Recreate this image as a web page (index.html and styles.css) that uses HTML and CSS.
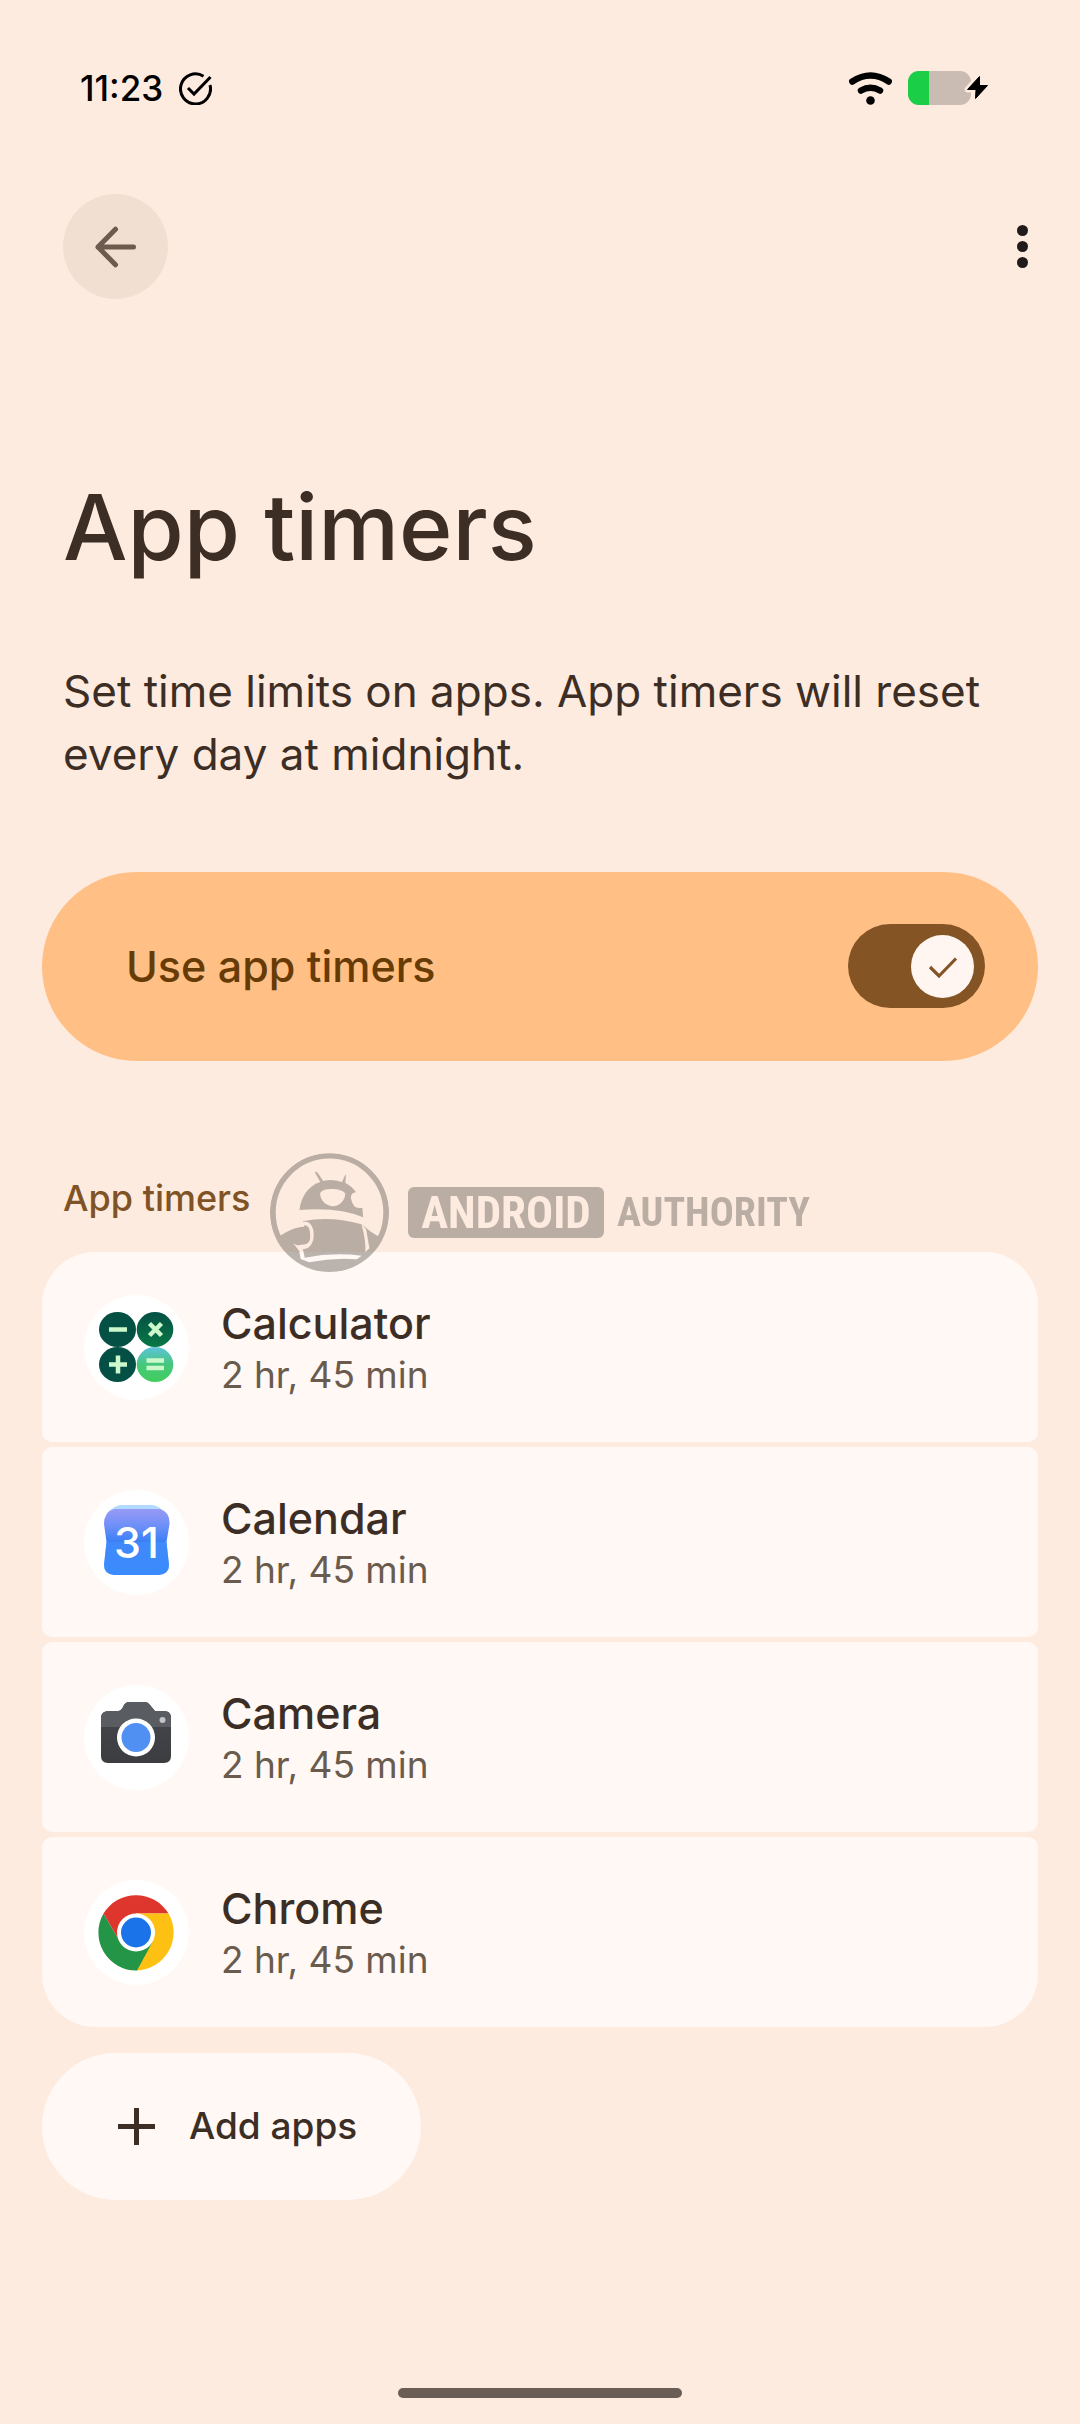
FILE: index.html
```html
<!DOCTYPE html>
<html lang="en">
<head>
<meta charset="utf-8">
<meta name="viewport" content="width=device-width, initial-scale=1">
<title>App timers</title>
<link rel="stylesheet" href="styles.css">
</head>
<body>
<header class="status">
  <div class="status-group">
    <time class="clock">11:23</time>
    <svg class="status-check" viewBox="0 0 33 33" aria-hidden="true"><path d="M24.500 4.200A15 15 0 1 0 31 13" fill="none" stroke="#000" stroke-width="3"/><path d="M9 16l6 6L31.500 5" fill="none" stroke="#000" stroke-width="3"/></svg>
  </div>
  <div class="status-group">
    <svg class="wifi" viewBox="0 0 43 33" aria-hidden="true"><g fill="none" stroke="#000" stroke-width="6.500" stroke-linecap="round"><path d="M3.300 9.500Q21.500-2.500 39.700 9.500"/><path d="M12 18.500Q21.500 13 31 18.500"/></g><circle cx="21.500" cy="28.500" r="4.300"/></svg>
    <svg class="battery" viewBox="0 0 81 34" aria-hidden="true"><rect width="63" height="34" rx="11" fill="#cbbcb3"/><path d="M11 0H21V34H11A11 11 0 0 1 0 23V11A11 11 0 0 1 11 0Z" fill="#1bce48"/><path d="M71.500 5L59.500 18.500H67L67.500 28.500L79.500 14.500H72Z" fill="#feebdf" stroke="#feebdf" stroke-width="6" stroke-linejoin="round"/><path d="M71.500 5.500L59.500 18.500H68L67.500 27.500L79.500 14.500H71.500Z" fill="#000" stroke="#000" stroke-width="1" stroke-linejoin="round"/></svg>
  </div>
</header>

<nav class="toolbar">
  <button class="back" type="button" aria-label="Back"><svg viewBox="0 0 42 42" aria-hidden="true"><path d="M38.500 21H3M20.500 3.200L3 21L20.500 38.800" fill="none" stroke="#6c5b4e" stroke-width="5" stroke-linecap="round" stroke-linejoin="round"/></svg></button>
  <button class="more" type="button" aria-label="More options"><svg viewBox="0 0 11 43" aria-hidden="true"><g fill="#211a1b"><circle cx="5.500" cy="5.500" r="5.500"/><circle cx="5.500" cy="21.500" r="5.500"/><circle cx="5.500" cy="37.500" r="5.500"/></g></svg></button>
</nav>

<main class="content">
  <h1 class="title">App timers</h1>
  <p class="intro">Set time limits on apps. App timers will reset every day at midnight.</p>

  <label class="master">
    <span>Use app timers</span>
    <span class="switch">
      <input class="switch-input" type="checkbox" role="switch" checked>
      <svg class="switch-check" viewBox="0 0 63 63" aria-hidden="true"><path d="M19 32L28 41L45 23.500" fill="none" stroke="#845425" stroke-width="3.200"/></svg>
    </span>
  </label>

  <section class="timers">
    <h2 class="label">App timers</h2>

    <div class="watermark">
      <svg class="mark" viewBox="54 69 322 357" preserveAspectRatio="none" aria-hidden="true">
        <defs>
          <clipPath id="disc"><ellipse cx="215" cy="247.500" rx="161" ry="178.500"/></clipPath>
          <mask id="robot" maskUnits="userSpaceOnUse" x="54" y="69" width="322" height="357">
            <ellipse cx="215" cy="247.500" rx="153.500" ry="170" fill="none" stroke="#fff" stroke-width="16"/>
            <path fill="#fff" d="M134 240C137 205 155 168 190 156L176 128Q175 120 184 130L198 153Q222 146 249 156L256 138Q262 127 259 142L258 159Q275 168 287 187Q272 189 273 204Q278 240 304 233L306 262Q240 230 134 240Z"/>
            <path fill="#fff" d="M60 335Q110 290 147 290L143 274Q215 256 302 283L325 304L376 340V426H54Z"/>
            <path fill="#000" d="M190 190C193 174 245 172 257 190C260 210 240 229 225 229C205 229 188 208 190 190Z"/>
            <path fill="#000" d="M143 276C166 271 174 297 172 322C169 348 155 359 143 357L148 383Q225 366 302 377L289 388Q225 382 160 397L137 387L133 362L116 339Q126 349 138 344C154 345 163 338 163 318C162 295 159 284 143 286Z"/>
            <path fill="#000" d="M301 281L314 298L323 355L312 366Q314 330 301 281Z"/>
          </mask>
        </defs>
        <g clip-path="url(#disc)"><rect x="54" y="69" width="322" height="357" fill="#79736b" mask="url(#robot)"/></g>
      </svg>
      <span class="brand brand-box">ANDROID</span>
      <span class="brand">AUTHORITY</span>
    </div>

    <ul class="list">
      <li class="row">
        <span class="app-icon"><svg viewBox="0 0 105 105" aria-hidden="true">
          <defs>
            <linearGradient id="times" x2="0" y2="1"><stop stop-color="#045044"/><stop offset="1" stop-color="#087846"/></linearGradient>
            <linearGradient id="equals" x2="0" y2="1"><stop stop-color="#5ec3dc"/><stop offset=".5" stop-color="#47c77c"/><stop offset="1" stop-color="#40ce5d"/></linearGradient>
          </defs>
          <ellipse cx="33.500" cy="34.500" rx="18.500" ry="17.500" fill="#055044"/><ellipse cx="71" cy="34.500" rx="18.300" ry="17.500" fill="url(#times)"/><ellipse cx="33.500" cy="69.500" rx="18.500" ry="17.500" fill="#055044"/><ellipse cx="71" cy="69.500" rx="18.300" ry="17.500" fill="url(#equals)"/>
          <g stroke="#cdf8cb" stroke-width="4.500" fill="none"><path d="M25 34.500H43M25 69.500H43M34 60.500V78.500M62.500 65.500H80M62.500 73H80"/><path d="M65.500 28.500L77.500 40.500M77.500 28.500L65.500 40.500"/></g>
        </svg></span>
        <div><h3 class="name">Calculator</h3><p class="limit">2 hr, 45 min</p></div>
      </li>
      <li class="row">
        <span class="app-icon"><svg viewBox="0 0 105 105" aria-hidden="true">
          <defs>
            <linearGradient id="page" x2="0" y2="1"><stop stop-color="#9899f5"/><stop offset=".25" stop-color="#6f90f8"/><stop offset=".5" stop-color="#397ff5"/><stop offset="1" stop-color="#3183fd"/></linearGradient>
          </defs>
          <path d="M23 23Q31 15 38 15H67Q75 15 82 24Z" fill="#b2d9fe"/>
          <path d="M30 19H76Q86 22 85.500 34L82.500 52L85 75Q85 84 75 85H30Q20 84 20 75L22.500 52L20 34Q20 22 30 19Z" fill="url(#page)"/>
          <path d="M22.500 52H82.500L85 75Q85 84 75 85H30Q20 84 20 75Z" fill="#4594ff" opacity=".5"/>
          <text class="date" x="52.500" y="68" text-anchor="middle">31</text>
        </svg></span>
        <div><h3 class="name">Calendar</h3><p class="limit">2 hr, 45 min</p></div>
      </li>
      <li class="row">
        <span class="app-icon"><svg viewBox="0 0 105 105" aria-hidden="true">
          <defs><linearGradient id="body" x2="0" y2="1"><stop stop-color="#46484c"/><stop offset="1" stop-color="#3c3d40"/></linearGradient></defs>
          <path d="M25 26H34Q37 26 39 22Q41 17 45 17H61Q64 17 66 20L71 26H80Q87 26 87 33V71Q87 78 80 78H24Q17 78 17 71V33Q17 26 25 26Z" fill="url(#body)"/>
          <path d="M25 26H34Q37 26 39 22Q41 17 45 17H61Q64 17 66 20L71 26H80Q87 26 87 33V42H17V33Q17 26 25 26Z" fill="#595d61"/>
          <circle cx="52" cy="52.500" r="19" fill="#fff"/><circle cx="52" cy="52.500" r="14.500" fill="#5090f2"/><circle cx="78.500" cy="35" r="3" fill="#c3c5c8"/>
        </svg></span>
        <div><h3 class="name">Camera</h3><p class="limit">2 hr, 45 min</p></div>
      </li>
      <li class="row">
        <span class="app-icon"><svg viewBox="0 0 105 105" aria-hidden="true">
          <path d="M52 52.500L19.500 33.500A38 38 0 0 1 84.500 33.500H52Z" fill="#de352c"/>
          <path d="M52 33.500H84.500A38 38 0 0 1 52.500 90.500L68 62Z" fill="#fdc013"/>
          <path d="M19.500 33.500A38 38 0 0 0 53 90.500L68.500 62L52 52.500L36 62Z" fill="#249446"/>
          <path d="M19.500 33.500L36 62L52 52.500V33.500Z" fill="#de352c"/>
          <circle cx="52" cy="52.500" r="19" fill="#fff"/><circle cx="52" cy="52.500" r="15" fill="#1a73e8"/>
        </svg></span>
        <div><h3 class="name">Chrome</h3><p class="limit">2 hr, 45 min</p></div>
      </li>
    </ul>
  </section>

  <button class="add" type="button"><svg viewBox="0 0 37 37" aria-hidden="true"><path d="M0 18.500H37M18.500 0V37" stroke="#3c2e25" stroke-width="5"/></svg>Add apps</button>
</main>

<footer class="gesture"><span class="gesture-bar"></span></footer>
</body>
</html>
```
FILE: styles.css
```css
* {
  box-sizing: border-box;
}

body {
  margin: 0;
  min-height: 100vh;
  display: flex;
  flex-direction: column;
  background: #feebdf;
  color: #3c2e25;
  font-family: Inter, "Liberation Sans", sans-serif;
}

h1, h2, h3, p, ul {
  margin: 0;
  padding: 0;
  font-weight: 500;
}

svg {
  display: block;
}

button {
  border: 0;
  font: inherit;
  color: inherit;
}

.status {
  display: flex;
  justify-content: space-between;
  align-items: center;
  height: 176px;
  padding: 0 91px 0 80px;
}

.status-group {
  display: flex;
  align-items: center;
  gap: 16px;
}

.clock {
  color: #000;
  font-size: 35px;
  font-weight: 500;
  line-height: 44px;
}

.status-check {
  width: 33px;
  height: 33px;
}

.wifi {
  width: 43px;
  height: 33px;
}

.battery {
  width: 81px;
  height: 34px;
}

.toolbar {
  display: flex;
  justify-content: space-between;
  align-items: center;
  padding: 18px 32px 0 63px;
}

.back {
  display: grid;
  place-items: center;
  width: 105px;
  height: 105px;
  padding: 0;
  border-radius: 50%;
  background: #f1dfd1;
}

.back svg {
  width: 42px;
  height: 42px;
}

.more {
  display: grid;
  place-items: center;
  width: 51px;
  height: 105px;
  padding: 0;
  background: none;
}

.more svg {
  width: 11px;
  height: 43px;
}

.content {
  flex: 1;
  padding: 172px 42px 0;
}

.title {
  padding: 0 21px;
  font-size: 91px;
  line-height: 112px;
}

.intro {
  margin-top: 77px;
  padding: 0 21px;
  font-size: 44px;
  font-weight: 400;
  line-height: 63px;
}

.master {
  display: flex;
  justify-content: space-between;
  align-items: center;
  margin-top: 86px;
  padding: 52px 53px 53px 84px;
  border-radius: 95px;
  background: #ffbf85;
  color: #663b06;
  font-size: 43px;
  font-weight: 500;
  line-height: 56px;
}

.switch {
  display: grid;
  align-items: center;
  justify-items: end;
}

.switch-input,
.switch-check {
  grid-area: 1 / 1;
}

.switch-input {
  appearance: none;
  width: 137px;
  height: 84px;
  margin: 0;
  border-radius: 42px;
  background: #d8c2b0;
}

.switch-input:checked {
  background: #845425;
}

.switch-check {
  width: 63px;
  height: 63px;
  margin-right: 11px;
  border-radius: 50%;
  background: #fff6f2;
  pointer-events: none;
}

.timers {
  position: relative;
  margin-top: 115px;
}

.label {
  padding: 0 21px;
  color: #7f5325;
  font-size: 36px;
  line-height: 44px;
}

.watermark {
  position: absolute;
  top: -23px;
  left: 228px;
  display: flex;
  align-items: center;
  gap: 13px;
  opacity: .5;
  pointer-events: none;
}

.mark {
  width: 119px;
  height: 119px;
  margin-right: 6px;
}

.brand {
  color: #79736b;
  font-family: "Liberation Sans Narrow", "Roboto Condensed", "Liberation Sans", sans-serif;
  font-size: 40px;
  font-weight: 700;
  line-height: 51px;
}

.brand-box {
  width: 196px;
  border-radius: 6px;
  background: #79736b;
  color: #feebdf;
  font-size: 45px;
  text-align: center;
}

.list {
  display: grid;
  gap: 5px;
  margin-top: 32px;
  list-style: none;
}

.row {
  display: flex;
  align-items: center;
  gap: 32px;
  padding: 43px 42px;
  border-radius: 10px;
  background: #fff8f4;
}

.row:first-child {
  border-radius: 53px 53px 10px 10px;
}

.row:last-child {
  border-radius: 10px 10px 53px 53px;
}

.app-icon {
  width: 105px;
  height: 105px;
  margin-bottom: -1px;
  border-radius: 50%;
  background: #fff;
}

.date {
  fill: #fff;
  font-size: 43px;
  font-weight: 500;
}

.name {
  font-size: 43px;
  line-height: 56px;
}

.limit {
  color: #6a5b4f;
  font-size: 37px;
  font-weight: 400;
  line-height: 48px;
}

.add {
  display: flex;
  align-items: center;
  gap: 34px;
  margin-top: 26px;
  padding: 51px 64px 52px 76px;
  border-radius: 74px;
  background: #fff8f4;
  font-size: 37px;
  font-weight: 500;
  line-height: 44px;
}

.add svg {
  width: 37px;
  height: 37px;
}

.gesture {
  display: flex;
  justify-content: center;
  padding: 27px 27px 26px;
}

.gesture-bar {
  width: 284px;
  height: 10px;
  border-radius: 5px;
  background: #6a5d55;
}
```
